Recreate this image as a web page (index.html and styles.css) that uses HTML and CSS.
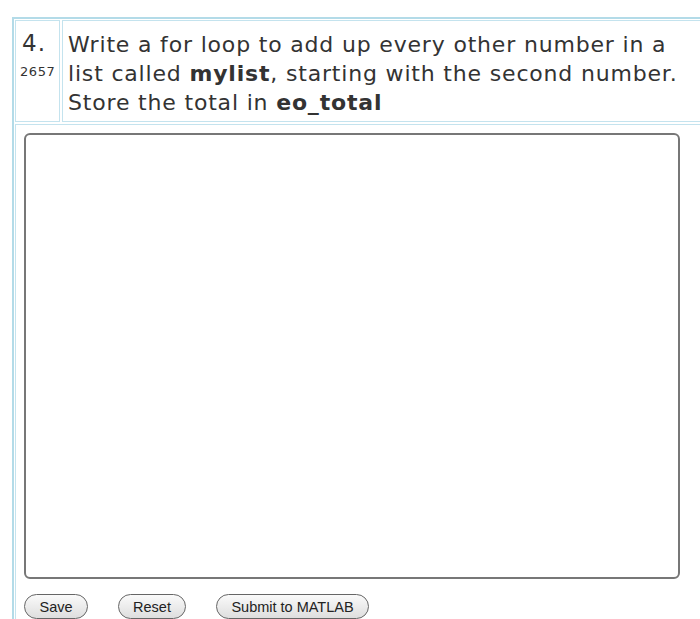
FILE: index.html
```html
<!DOCTYPE html>
<html>
<head>
<meta charset="utf-8">
<link rel="stylesheet" href="styles.css">
</head>
<body>
<div class="sheet">
  <div class="row head">
    <div class="cell num">
      <div class="qnum">4.</div>
      <div class="qid">2657</div>
    </div>
    <div class="cell prompt">
      <div class="line">Write a for loop to add up every other number in a</div>
      <div class="line">list called <b>mylist</b>, starting with the second number.</div>
      <div class="line">Store the total in <b>eo_total</b></div>
    </div>
  </div>
  <div class="row body">
    <div class="cell work">
      <textarea class="code"></textarea>
      <div class="buttons">
        <button class="btn save">Save</button>
        <button class="btn reset">Reset</button>
        <button class="btn submit">Submit to MATLAB</button>
      </div>
    </div>
  </div>
</div>
</body>
</html>
```
FILE: styles.css
```css
html, body {
  margin: 0;
  padding: 0;
  background: #fff;
  overflow: hidden;
  height: 619px;
}
body {
  font-family: "DejaVu Sans", Verdana, sans-serif;
  color: #333;
}
.sheet {
  margin: 17px 0 0 12px;
  width: 720px;
  border: 2px solid #b3dbe8;
  border-right: none;
  border-bottom: none;
  padding: 1px 0 0 1px;
  display: flex;
  flex-direction: column;
  gap: 2px;
}
.row {
  display: flex;
  gap: 2px;
}
.cell {
  border: 1px solid #c4e3ee;
}
.num {
  flex: none;
  box-sizing: border-box;
  width: 45px;
  height: 102px;
}
.qnum {
  font-size: 23px;
  line-height: 26px;
  letter-spacing: 1px;
  margin: 9px 0 0 6px;
}
.qid {
  font-size: 13px;
  letter-spacing: 0.6px;
  margin: 8px 0 0 4px;
}
.prompt {
  flex: 1;
  font-size: 22px;
  line-height: 29px;
  letter-spacing: 0.82px;
  padding: 9px 0 0 5px;
  height: 102px;
  box-sizing: border-box;
  white-space: nowrap;
}
.line {
  height: 29px;
}
.prompt b {
  font-weight: bold;
}
.work {
  flex: 1;
  padding: 8px 0 0 8px;
  height: 486px;
  border-bottom: none;
}
.code {
  display: block;
  width: 656px;
  height: 446px;
  box-sizing: border-box;
  border: 2px solid #777;
  border-radius: 6px;
  resize: none;
  margin: 0;
  outline: none;
  background: #fff;
}
.buttons {
  display: flex;
  gap: 30px;
  margin-top: 15px;
}
.btn {
  font-family: "Liberation Sans", Arial, sans-serif;
  font-size: 14.5px;
  color: #222;
  height: 25px;
  border: 1px solid #666;
  border-radius: 13px;
  background: linear-gradient(#fafafa, #dedede);
  padding: 0;
}
.save { width: 64px; }
.reset { width: 68px; }
.submit { width: 153px; }
```
